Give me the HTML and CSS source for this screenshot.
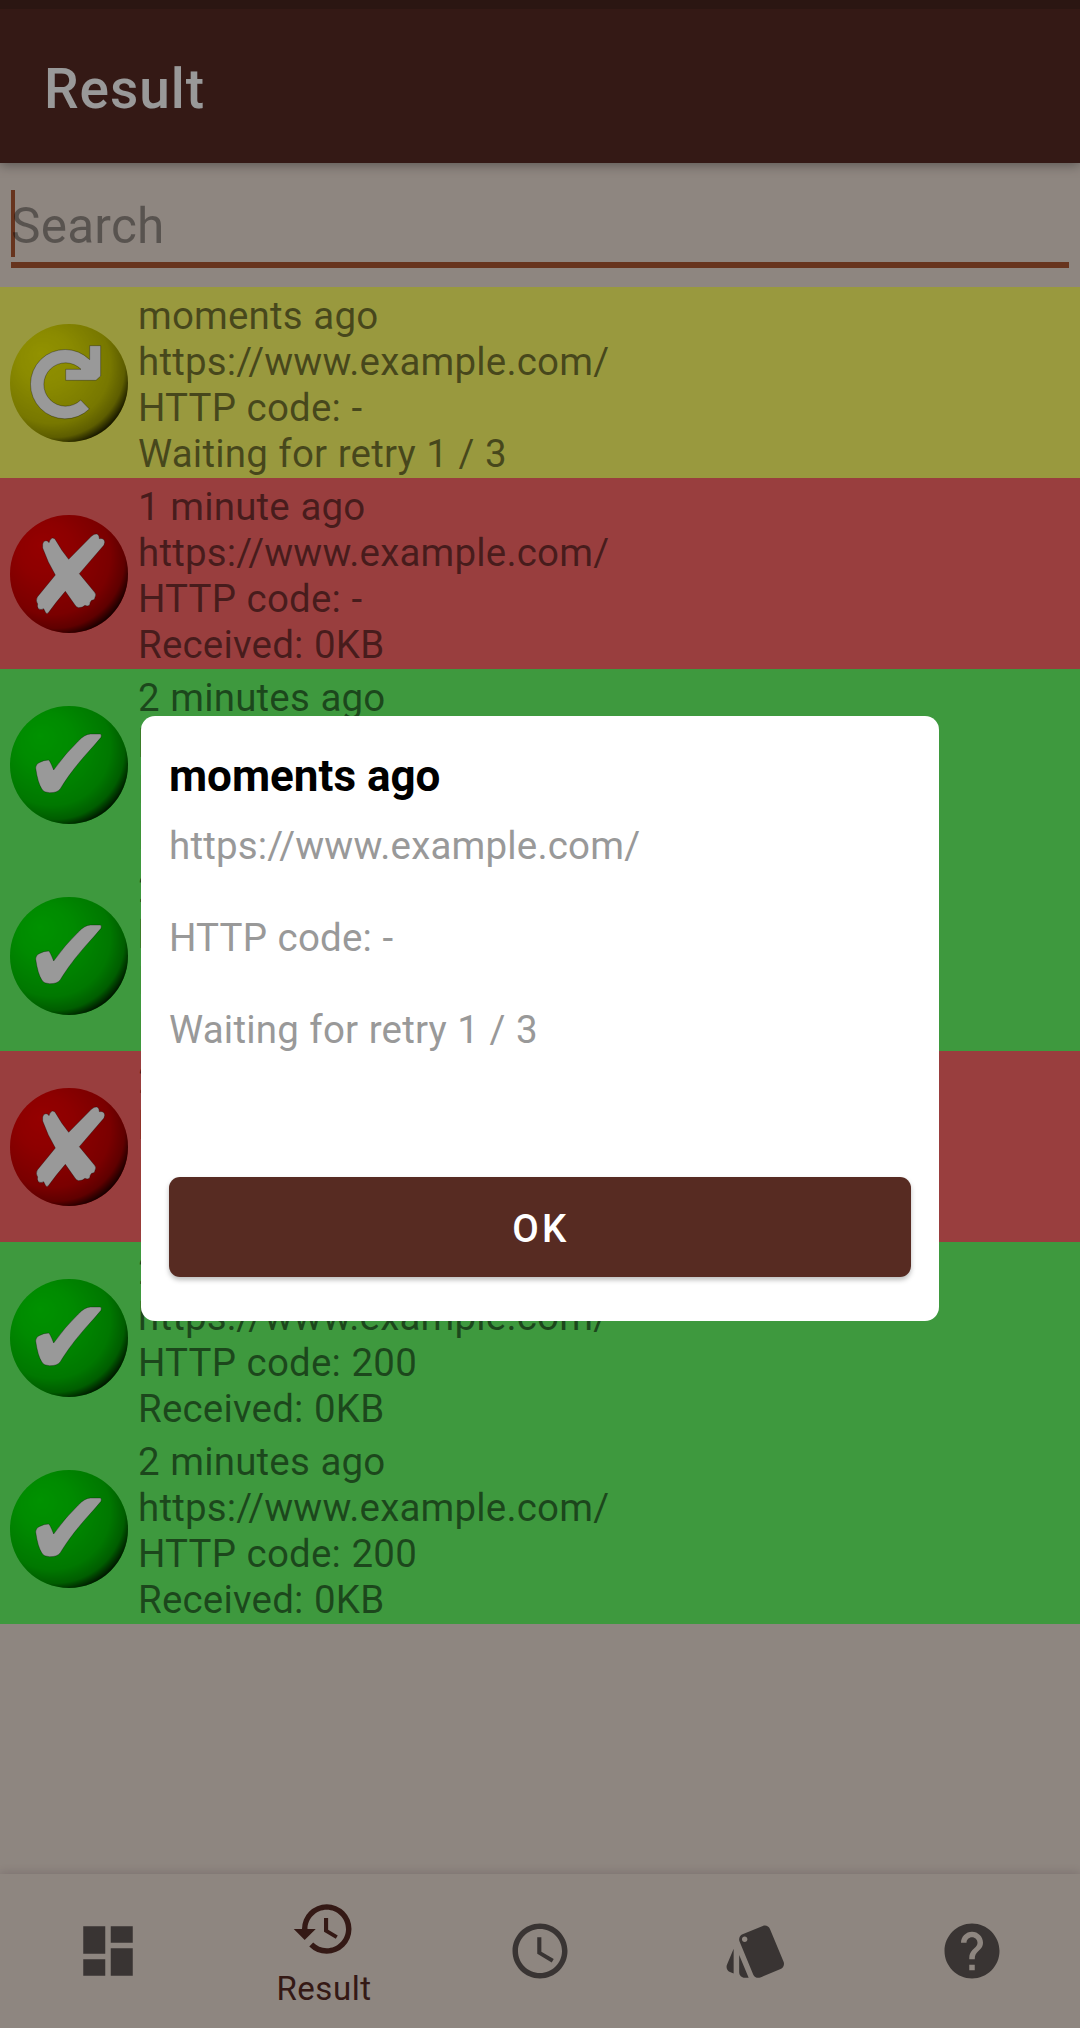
FILE: index.html
```
<!DOCTYPE html>
<html lang="en">
<head>
<meta charset="utf-8">
<title>Result</title>
<link rel="stylesheet" href="styles.css">
</head>
<body>
<svg class="defs" aria-hidden="true">
  <defs>
    <radialGradient id="shade" cx="0.39" cy="0.38" r="0.66" fx="0.25" fy="0.25">
      <stop offset="0" stop-color="#000" stop-opacity="0"/>
      <stop offset="0.35" stop-color="#000" stop-opacity="0.05"/>
      <stop offset="0.75" stop-color="#000" stop-opacity="0.18"/>
      <stop offset="0.9" stop-color="#000" stop-opacity="0.36"/>
      <stop offset="1" stop-color="#000" stop-opacity="0.85"/>
    </radialGradient>
    <symbol id="retry" viewBox="30 102 354 354">
      <circle cx="207" cy="279" r="177" fill="#f3f300"/>
      <circle cx="207" cy="279" r="177" fill="url(#shade)"/>
      <path class="glyph" d="M269 167H302V258L288 271H197V238H243A65 65 0 1 0 242 330L268 357A104 104 0 1 1 269 209Z"/>
    </symbol>
    <symbol id="fail" viewBox="30 105 354 354">
      <circle cx="207" cy="282" r="177" fill="#f80000"/>
      <circle cx="207" cy="282" r="177" fill="url(#shade)"/>
      <path class="glyph" d="M128 192Q130 182 138 182Q144 182 147 188Q150 176 158 174Q165 174 168 182Q184 211 206 238L274 169Q284 160 291 162Q298 165 298 176Q305 174 312 179Q317 186 312 195L238 281L284 337Q290 344 285 352Q285 361 275 361Q269 366 269 375Q262 380 255 376Q248 383 236 383Q228 381 225 375L196 334Q170 364 145 398Q140 404 136 396L131 386Q123 391 115 386Q110 380 113 372Q106 362 112 351L166 285Q143 247 128 204Z"/>
    </symbol>
    <symbol id="ok" viewBox="30 138 354 354">
      <circle cx="207" cy="315" r="177" fill="#00f300"/>
      <circle cx="207" cy="315" r="177" fill="url(#shade)"/>
      <path class="glyph" d="M107 324Q107 313 117 308Q132 300 146 300Q150 302 161 330Q194 283 235 243Q255 222 272 222H300Q306 222 303 232Q285 254 260 281C224 322 202 352 181 386Q172 399 148 398Q132 398 126 388Q113 368 107 324Z"/>
    </symbol>
  </defs>
</svg>
<div class="screen">
  <header class="appbar"><h1>Result</h1></header>
  <div class="search"><div class="field"><span class="caret"></span><span class="hint">Search</span></div></div>
  <main class="list">
    <div class="row retry"><svg class="badge"><use href="#retry"/></svg><p>moments ago<br>https://www.example.com/<br>HTTP code: -<br>Waiting for retry 1 / 3</p></div>
    <div class="row fail"><svg class="badge"><use href="#fail"/></svg><p>1 minute ago<br>https://www.example.com/<br>HTTP code: -<br>Received: 0KB</p></div>
    <div class="row ok"><svg class="badge"><use href="#ok"/></svg><p>2 minutes ago<br>https://www.example.com/<br>HTTP code: 200<br>Received: 0KB</p></div>
    <div class="row ok"><svg class="badge"><use href="#ok"/></svg><p>2 minutes ago<br>https://www.example.com/<br>HTTP code: 200<br>Received: 0KB</p></div>
    <div class="row fail"><svg class="badge"><use href="#fail"/></svg><p>2 minutes ago<br>https://www.example.com/<br>HTTP code: -<br>Received: 0KB</p></div>
    <div class="row ok"><svg class="badge"><use href="#ok"/></svg><p>2 minutes ago<br>https://www.example.com/<br>HTTP code: 200<br>Received: 0KB</p></div>
    <div class="row ok"><svg class="badge"><use href="#ok"/></svg><p>2 minutes ago<br>https://www.example.com/<br>HTTP code: 200<br>Received: 0KB</p></div>
  </main>
  <nav class="tabs">
    <a class="tab"><svg viewBox="0 0 24 24"><path d="M3 13h8V3H3v10zm0 8h8v-6H3v6zm10 0h8V11h-8v10zm0-18v6h8V3h-8z"/></svg></a>
    <a class="tab active"><svg viewBox="0 0 24 24"><path d="M13 3a9 9 0 0 0-9 9H1l3.89 3.89.07.14L9 12H6c0-3.87 3.13-7 7-7s7 3.13 7 7-3.13 7-7 7c-1.93 0-3.68-.79-4.94-2.06l-1.42 1.42A8.954 8.954 0 0 0 13 21a9 9 0 0 0 0-18zm-1 5v5l4.28 2.54.72-1.21-3.5-2.08V8H12z"/></svg><span>Result</span></a>
    <a class="tab"><svg viewBox="0 0 24 24"><path d="M11.99 2C6.47 2 2 6.48 2 12s4.47 10 9.99 10C17.52 22 22 17.52 22 12S17.52 2 11.99 2zM12 20c-4.42 0-8-3.58-8-8s3.58-8 8-8 8 3.58 8 8-3.58 8-8 8zm.5-13H11v6l5.25 3.15.75-1.23-4.5-2.67z"/></svg></a>
    <a class="tab"><svg viewBox="0 0 24 24"><path d="M2.53 19.65l1.34.56v-9.03l-2.43 5.86c-.41 1.02.08 2.19 1.09 2.61zm19.5-3.7L17.07 3.98c-.31-.75-1.04-1.21-1.81-1.23-.26 0-.53.04-.79.15L7.1 5.95c-.75.31-1.21 1.03-1.23 1.8-.01.27.04.54.15.8l4.96 11.97c.31.76 1.05 1.22 1.83 1.23.26 0 .52-.05.77-.15l7.36-3.05c1.02-.42 1.51-1.59 1.09-2.6zM7.88 8.75c-.55 0-1-.45-1-1s.45-1 1-1 1 .45 1 1-.45 1-1 1zm-2 11c0 1.1.9 2 2 2h1.45l-3.45-8.34v6.34z"/></svg></a>
    <a class="tab"><svg viewBox="0 0 24 24"><path d="M12 2C6.48 2 2 6.48 2 12s4.48 10 10 10 10-4.48 10-10S17.52 2 12 2zm1 17h-2v-2h2v2zm2.07-7.75l-.9.92C13.45 12.9 13 13.5 13 15h-2v-.5c0-1.1.45-2.1 1.17-2.83l1.24-1.26c.37-.36.59-.86.59-1.41 0-1.1-.9-2-2-2s-2 .9-2 2H8c0-2.21 1.79-4 4-4s4 1.79 4 4c0 .88-.36 1.68-.93 2.25z"/></svg></a>
  </nav>
</div>
<div class="scrim">
  <section class="dialog" role="dialog">
    <h2>moments ago</h2>
    <p>https://www.example.com/</p>
    <p>HTTP code: -</p>
    <p>Waiting for retry 1 / 3</p>
    <button>OK</button>
  </section>
</div>
</body>
</html>
```
FILE: styles.css
```
* { box-sizing: border-box; margin: 0; }

body {
  width: 1080px;
  height: 2028px;
  overflow: hidden;
  position: relative;
  font-family: Roboto, "Liberation Sans", sans-serif;
  font-size: 38.5px;
  line-height: 46px;
  letter-spacing: .18px;
  word-spacing: .7px;
}

.defs { position: absolute; width: 0; height: 0; }

.glyph { fill: #fff; stroke: rgba(0, 0, 0, .45); stroke-width: 2; }

.screen {
  height: 2028px;
  display: flex;
  flex-direction: column;
  background: #eddfd5;
}

.appbar {
  position: relative;
  height: 163px;
  padding: 5px 44px 0;
  display: flex;
  align-items: center;
  border-top: 9px solid #48261e;
  background: #572b24;
  box-shadow: 0 2px 11px rgba(0, 0, 0, .36);
}

.appbar h1 {
  color: #fff;
  font-size: 55px;
  line-height: 64px;
  font-weight: 500;
  letter-spacing: .95px;
}

.search { height: 124px; padding: 27px 11px 0; }

.field {
  height: 78px;
  display: flex;
  border-bottom: 6px solid #ac5733;
}

.caret { width: 4px; height: 67px; margin-right: -4px; background: #ac5733; }

.hint {
  position: relative;
  color: rgba(0, 0, 0, .38);
  font-size: 49.5px;
  line-height: 73px;
  letter-spacing: .25px;
}

.row {
  height: 191px;
  padding: 6px 10px 0;
  display: flex;
  align-items: flex-start;
  gap: 10px;
  color: rgba(0, 0, 0, .54);
}

.row.retry { background: #ffff68; }
.row.fail { background: #ff6868; }
.row.ok { background: #68ff68; }

.badge { width: 118px; height: 118px; margin-top: 31px; flex: none; }

.tabs {
  height: 154px;
  margin-top: auto;
  display: grid;
  grid-template-columns: repeat(5, 1fr);
  background: #eddfd5;
  box-shadow: 0 -1px 9px rgba(40, 0, 40, .16);
}

.tab {
  display: flex;
  flex-direction: column;
  align-items: center;
  justify-content: center;
  fill: #5f5855;
  color: #572b24;
  font-size: 33px;
  line-height: 40px;
  letter-spacing: .55px;
}

.tab.active { fill: #572b24; justify-content: flex-start; padding-top: 22px; }
.tab.active span { margin-top: 7px; }
.tab svg { width: 66px; height: 66px; }

.scrim {
  position: absolute;
  inset: 0;
  padding-top: 9px;
  display: flex;
  align-items: center;
  justify-content: center;
  background: rgba(0, 0, 0, .4);
}

.dialog {
  width: 798px;
  height: 605px;
  padding: 37px 28px 44px;
  display: flex;
  flex-direction: column;
  border-radius: 14px;
  background: #fff;
  color: #999;
}

.dialog h2 {
  margin-bottom: 24px;
  color: #000;
  font-size: 44px;
  line-height: 46px;
  font-weight: 700;
  letter-spacing: 0;
  word-spacing: 0;
}

.dialog p { margin-bottom: 46px; }

.dialog button {
  height: 100px;
  margin-top: auto;
  padding: 4px 0 0 2px;
  border: 0;
  border-radius: 11px;
  background: #572b22;
  box-shadow: 0 3px 5px rgba(0, 0, 0, .26);
  color: #fff;
  font: 500 38.5px/46px Roboto, "Liberation Sans", sans-serif;
  letter-spacing: 3.4px;
}
```
